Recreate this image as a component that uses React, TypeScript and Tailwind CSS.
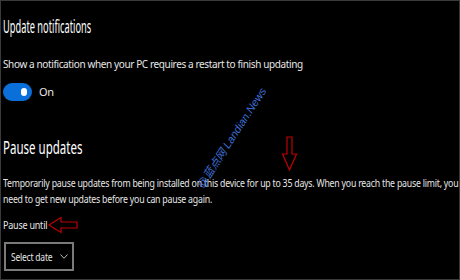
import React from "react";

function DownArrow() {
  return (
    <svg className="absolute left-[280px] top-[134px]" width="18" height="38" viewBox="280 134 18 38">
      <polygon
        points="286,136 291,136 291,153 295.5,153 288.5,169 281.5,153 286,153"
        fill="none"
        stroke="#c00000"
        strokeWidth="1.2"
      />
    </svg>
  );
}

function LeftArrow() {
  return (
    <svg className="absolute left-[46px] top-[214px]" width="32" height="20" viewBox="46 214 32 20">
      <polygon
        points="48,224 60,216.5 60,221 76,221 76,227 60,227 60,231.5"
        fill="none"
        stroke="#c00000"
        strokeWidth="1.2"
      />
    </svg>
  );
}

export default function App() {
  return (
    <div className="relative h-[280px] w-[460px] overflow-hidden border border-[#3a3a3a] bg-black">
      <div className="flex flex-col items-start pl-[2px] pt-[14px] font-['Noto_Sans',sans-serif] text-[10px] leading-[16px] tracking-[-0.25px] text-[#e6e6e6]">
        <h2 className="origin-left scale-x-[0.515] whitespace-nowrap text-[18px] font-normal leading-[22px] tracking-normal text-white">
          Update notifications
        </h2>
        <p className="mt-[19px] whitespace-nowrap tracking-[-0.38px]">
          Show a notification when your PC requires a restart to finish updating
        </p>
        <div className="mt-[11px] flex items-center gap-[7px]">
          <div className="flex h-[18px] w-[29px] items-center justify-end rounded-full bg-[#0a6fd8] pr-[5px]">
            <div className="h-[8px] w-[6px] rounded-full bg-white" />
          </div>
          <span className="text-[11px]">On</span>
        </div>
        <h2 className="mt-[35px] origin-left scale-x-[0.64] whitespace-nowrap text-[18px] font-normal leading-[22px] tracking-normal text-white">
          Pause updates
        </h2>
        <p className="mt-[17px] origin-left scale-x-[0.875] whitespace-nowrap">
          Temporarily pause updates from being installed on this device for up to 35 days. When you reach the pause limit, you
          <br />
          need to get new updates before you can pause again.
        </p>
        <p className="mt-[10px] origin-left scale-x-[0.9] whitespace-nowrap">Pause until</p>
        <div className="ml-[1px] mt-[9px] flex h-[29px] w-[70px] items-center justify-between border-2 border-[#7a7a7a] pl-[5px] pr-[4px]">
          <span className="origin-left scale-x-[0.85] whitespace-nowrap">Select date</span>
          <svg width="8" height="5" viewBox="0 0 8 5" fill="none" stroke="#d0d0d0" strokeWidth="0.9">
            <path d="M0.5 0.5 L4 4.3 L7.5 0.5" />
          </svg>
        </div>
      </div>

      <div className="absolute left-[231px] top-[137px] -translate-x-1/2 -translate-y-1/2 -rotate-[57deg] whitespace-nowrap font-['Liberation_Sans','Noto_Sans_CJK_SC',sans-serif] text-[11px] italic leading-none text-[#3e6fd6]">
        @蓝点网 Landian.News
      </div>

      <DownArrow />
      <LeftArrow />
    </div>
  );
}
